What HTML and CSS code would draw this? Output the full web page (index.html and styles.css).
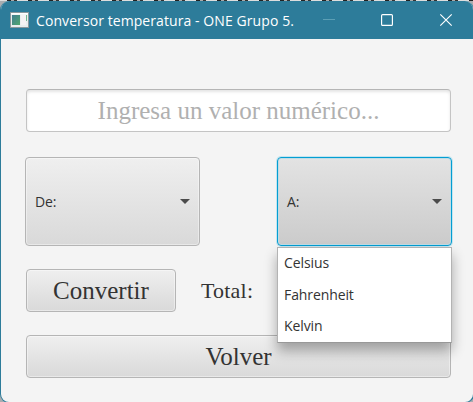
FILE: index.html
```html
<!DOCTYPE html>
<html lang="es">
<head>
<meta charset="utf-8">
<title>Conversor temperatura - ONE Grupo 5.</title>
<link rel="stylesheet" href="styles.css">
</head>
<body>
<div class="window">
  <header class="titlebar">
    <svg class="app-icon" width="19" height="16" viewBox="0 0 19 16">
      <defs><linearGradient id="g" x1="0" y1="0" x2="1" y2="1"><stop offset="0" stop-color="#427f92"/><stop offset="1" stop-color="#4fa66e"/></linearGradient></defs>
      <rect x=".5" y=".5" width="18" height="15" fill="#e9eeee" stroke="#8b989d"/>
      <rect x="1" y="1" width="17" height="1.5" fill="#fff"/>
      <rect x="2" y="3" width="8" height="10" fill="url(#g)"/>
      <rect x="11" y="3" width="5" height="10" fill="#f5f3f4"/>
      <rect x="16" y="3" width="1" height="6" fill="#72b78f"/>
    </svg>
    <span class="title">Conversor temperatura - ONE Grupo 5.</span>
    <svg class="controls" width="130" height="14" viewBox="0 0 130 14" fill="none">
      <path d="M0 6.5h12" stroke="#5c9fb5"/>
      <rect x="58.6" y="1.6" width="10.8" height="10.8" rx="1" stroke="#fff" stroke-width="1.15"/>
      <path d="M117.3 1.3l11.4 11.4M128.7 1.3l-11.4 11.4" stroke="#fff" stroke-width="1.15"/>
    </svg>
  </header>
  <main class="form">
    <input class="field" type="text" placeholder="Ingresa un valor numérico...">
    <div class="selects">
      <div class="combo"><span>De:</span><i class="arrow"></i></div>
      <div class="combo open"><span>A:</span><i class="arrow"></i>
        <ul class="menu"><li>Celsius</li><li>Fahrenheit</li><li>Kelvin</li></ul>
      </div>
    </div>
    <div class="actions">
      <button class="button convert"><span>Convertir</span></button>
      <span class="total">Total:</span>
    </div>
    <button class="button back"><span>Volver</span></button>
  </main>
</div>
</body>
</html>
```
FILE: styles.css
```css
* { box-sizing: border-box; }
body {
  margin: 0;
  padding-top: 1px;
  width: 473px;
  height: 402px;
  overflow: hidden;
  background: linear-gradient(transparent 1px, #a9adb0 1px), repeating-linear-gradient(90deg, #ddd 0 7px, #222 7px 11px, #aaa 11px 14px, #333 14px 17px, #ddd 17px 21px);
  font-family: "Open Sans", "Noto Sans", sans-serif;
}
.window {
  width: 474px;
  height: 402px;
  border: 1px solid #2d7c9a;
  border-top: 0;
  border-radius: 9px;
  overflow: hidden;
  background: #f4f4f4;
}
.titlebar {
  display: flex;
  align-items: center;
  height: 38px;
  padding-left: 9px;
  background: #2d7c9a;
  color: #fff;
}
.title {
  width: 287px;
  margin-left: 7px;
  font-size: 14px;
  letter-spacing: 0.08px;
  white-space: nowrap;
}
.controls { flex: none; }
.form { padding: 50px 0 0 25px; }
.field {
  display: block;
  width: 425px;
  height: 43px;
  padding: 1px 0 0;
  border: 1px solid #c4c4c4;
  border-top-color: #b5b5b5;
  border-radius: 4px;
  outline: 0;
  background: #fff;
  box-shadow: inset 0 2px 3px #e5e5e5;
  text-align: center;
  font: 25px "Liberation Serif", serif;
}
.field::placeholder { color: #b0b0b0; opacity: 1; }
.selects {
  display: flex;
  justify-content: space-between;
  width: 427px;
  margin: 25px 0 0 -1px;
}
.combo {
  position: relative;
  display: flex;
  align-items: center;
  justify-content: space-between;
  width: 175px;
  height: 89px;
  padding: 0 9px;
  border: 1px solid #b5b5b5;
  border-radius: 4px;
  background: linear-gradient(#efefef, #d9d9d9);
  box-shadow: inset 0 0 0 1px rgba(255, 255, 255, .4);
  color: #333;
  font-size: 14px;
  letter-spacing: -0.1px;
}
.combo.open {
  border-color: #039ed3;
  background: linear-gradient(#e3e3e3, #cbcbcb);
  box-shadow: 0 0 0 1px #c5e5ef, inset 0 0 0 1px #c0dce5;
}
.arrow {
  width: 10px;
  height: 5px;
  background: #4b4b4b;
  clip-path: polygon(0 0, 100% 0, 50% 100%);
}
.menu {
  position: absolute;
  z-index: 1;
  left: -1px;
  top: 89px;
  width: 175px;
  height: 96px;
  margin: 0;
  padding: 0 0 0 6px;
  border: 1px solid #b3b3b3;
  border-bottom-color: #989898;
  background: #fff;
  box-shadow: 0 8px 12px rgba(0, 0, 0, .32);
  list-style: none;
}
.menu li { height: 31.5px; line-height: 29px; }
.actions { display: flex; align-items: center; margin-top: 23px; }
.button {
  display: block;
  height: 43px;
  padding: 0;
  border: 1px solid #b5b5b5;
  border-radius: 4px;
  background: linear-gradient(#efefef, #d9d9d9);
  box-shadow: inset 0 0 0 1px rgba(255, 255, 255, .4);
  color: #333;
  font: 25px "Liberation Serif", serif;
}
.convert { width: 150px; }
.back { width: 425px; margin-top: 23px; }
.total {
  margin-left: 25px;
  color: #333;
  font: 22px "Liberation Serif", serif;
  letter-spacing: 0.2px;
}
```
